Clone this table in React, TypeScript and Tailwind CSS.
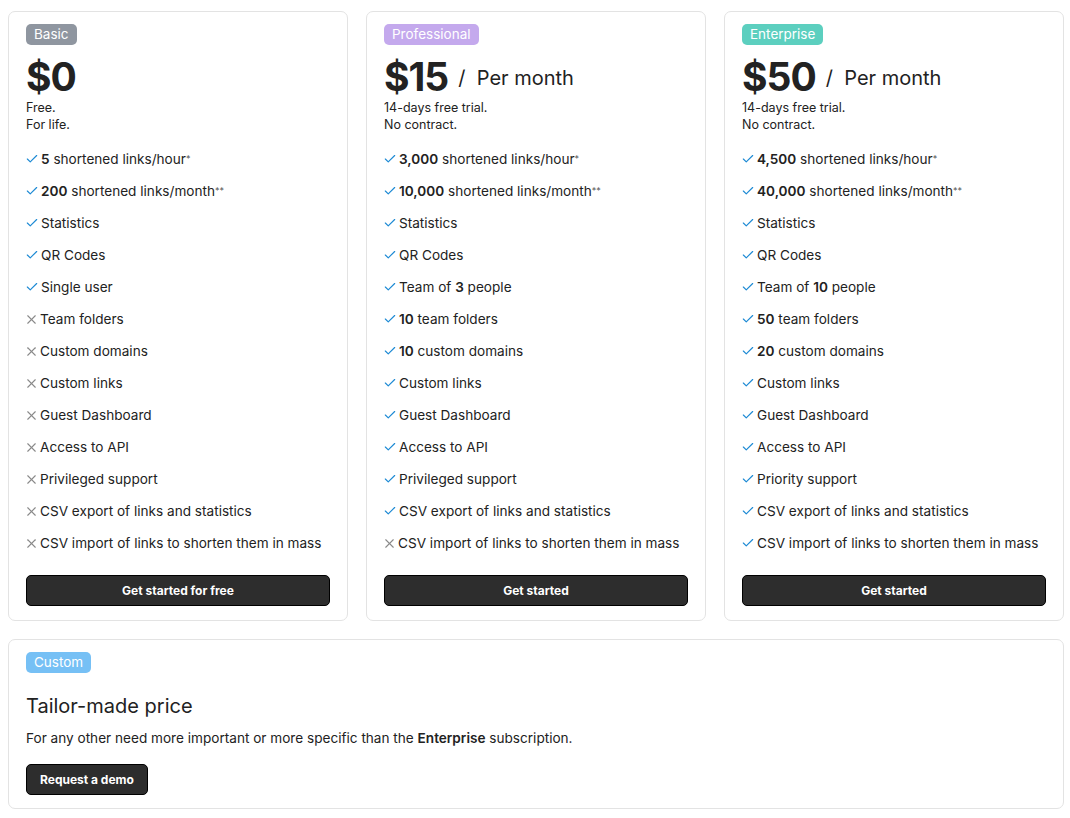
import { Check, X } from "lucide-react";

type Feature = { ok: boolean; text: React.ReactNode };

type Plan = {
    name: string;
    badge: string;
    price: string;
    perMonth: boolean;
    notes: string[];
    cta: string;
    features: Feature[];
};

const star = <span className="text-[9px] align-top relative top-[3px] text-[#555]">*</span>;
const stars = <span className="text-[9px] align-top relative top-[3px] text-[#555]">**</span>;

const plans: Plan[] = [
    {
        name: "Basic",
        badge: "bg-[#8f96a0]",
        price: "$0",
        perMonth: false,
        notes: ["Free.", "For life."],
        cta: "Get started for free",
        features: [
            { ok: true, text: <><b>5</b> shortened links/hour{star}</> },
            { ok: true, text: <><b>200</b> shortened links/month{stars}</> },
            { ok: true, text: "Statistics" },
            { ok: true, text: "QR Codes" },
            { ok: true, text: "Single user" },
            { ok: false, text: "Team folders" },
            { ok: false, text: "Custom domains" },
            { ok: false, text: "Custom links" },
            { ok: false, text: "Guest Dashboard" },
            { ok: false, text: "Access to API" },
            { ok: false, text: "Privileged support" },
            { ok: false, text: "CSV export of links and statistics" },
            { ok: false, text: "CSV import of links to shorten them in mass" },
        ],
    },
    {
        name: "Professional",
        badge: "bg-[#c4a9ed]",
        price: "$15",
        perMonth: true,
        notes: ["14-days free trial.", "No contract."],
        cta: "Get started",
        features: [
            { ok: true, text: <><b>3,000</b> shortened links/hour{star}</> },
            { ok: true, text: <><b>10,000</b> shortened links/month{stars}</> },
            { ok: true, text: "Statistics" },
            { ok: true, text: "QR Codes" },
            { ok: true, text: <>Team of <b>3</b> people</> },
            { ok: true, text: <><b>10</b> team folders</> },
            { ok: true, text: <><b>10</b> custom domains</> },
            { ok: true, text: "Custom links" },
            { ok: true, text: "Guest Dashboard" },
            { ok: true, text: "Access to API" },
            { ok: true, text: "Privileged support" },
            { ok: true, text: "CSV export of links and statistics" },
            { ok: false, text: "CSV import of links to shorten them in mass" },
        ],
    },
    {
        name: "Enterprise",
        badge: "bg-[#5ccfbf]",
        price: "$50",
        perMonth: true,
        notes: ["14-days free trial.", "No contract."],
        cta: "Get started",
        features: [
            { ok: true, text: <><b>4,500</b> shortened links/hour{star}</> },
            { ok: true, text: <><b>40,000</b> shortened links/month{stars}</> },
            { ok: true, text: "Statistics" },
            { ok: true, text: "QR Codes" },
            { ok: true, text: <>Team of <b>10</b> people</> },
            { ok: true, text: <><b>50</b> team folders</> },
            { ok: true, text: <><b>20</b> custom domains</> },
            { ok: true, text: "Custom links" },
            { ok: true, text: "Guest Dashboard" },
            { ok: true, text: "Access to API" },
            { ok: true, text: "Priority support" },
            { ok: true, text: "CSV export of links and statistics" },
            { ok: true, text: "CSV import of links to shorten them in mass" },
        ],
    },
];

const Badge = ({ label, color }: { label: string; color: string }) => (
    <div className="flex">
        <span className={`${color} text-white text-[13.5px] leading-[21px] px-[8px] rounded-[5px]`}>
            {label}
        </span>
    </div>
);

const PlanCard = ({ plan }: { plan: Plan }) => (
    <div className="flex flex-col border border-[#e3e3e3] rounded-[7px] bg-white px-[17px] pt-[12px] pb-[14px]">
        <Badge label={plan.name} color={plan.badge} />
        <div className="flex items-center mt-[12px]">
            <span className="text-[39px] leading-[40px] font-bold tracking-[-1px]">{plan.price}</span>
            {plan.perMonth && (
                <span className="text-[20px] leading-[28px] ml-[10px] mt-[2px]">/&nbsp; Per month</span>
            )}
        </div>
        <div className="text-[12.5px] leading-[17px] mt-[2px]">
            {plan.notes.map((n) => (
                <div key={n}>{n}</div>
            ))}
        </div>
        <ul className="mt-[10px] flex flex-col">
            {plan.features.map((f, i) => (
                <li key={i} className="h-8 flex items-center text-[13.6px] whitespace-nowrap">
                    {f.ok ? (
                        <Check size={14} strokeWidth={2} className="text-[#1d8ad4] -ml-[1px] mr-[2px] shrink-0" />
                    ) : (
                        <X size={15} strokeWidth={1.8} className="text-[#8a8a8a] -ml-[2px] mr-[1px] shrink-0" />
                    )}
                    <span className="[&_b]:font-semibold">{f.text}</span>
                </li>
            ))}
        </ul>
        <button className="mt-[16px] h-[31px] bg-[#2d2d2d] text-white text-[12px] font-bold rounded-[5px] border border-black">
            {plan.cta}
        </button>
    </div>
);

export default function App() {
    return (
        <div className="bg-white min-h-[818px] pl-[8px] pr-[6px] pt-[11px] text-[#222] font-['Inter','Noto_Sans',sans-serif]">
            <div className="grid grid-cols-3 gap-[18px]">
                {plans.map((p) => (
                    <PlanCard key={p.name} plan={p} />
                ))}
            </div>
            <div className="mt-[18px] border border-[#e3e3e3] rounded-[7px] px-[17px] pt-[12px] pb-[13px]">
                <Badge label="Custom" color="bg-[#76c0f5]" />
                <div className="text-[20px] mt-[19px] leading-[28px]">Tailor-made price</div>
                <p className="text-[13.6px] mt-[8px]">
                    For any other need more important or more specific than the <b className="font-semibold">Enterprise</b> subscription.
                </p>
                <button className="mt-[16px] h-[31px] px-[13px] bg-[#2d2d2d] text-white text-[12px] font-bold rounded-[5px] border border-black">
                    Request a demo
                </button>
            </div>
        </div>
    );
}
